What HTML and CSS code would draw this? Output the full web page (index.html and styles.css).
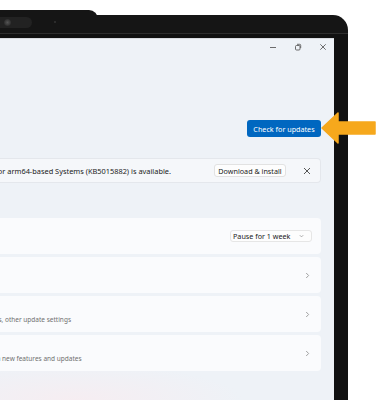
FILE: index.html
```html
<!DOCTYPE html>
<html lang="en">
<head>
    <meta charset="UTF-8">
    <meta name="viewport" content="width=device-width, initial-scale=1.0">
    <link rel="stylesheet" href="styles.css">
    <title>Windows Update</title>
</head>
<body>

    <div class="device">
        <div class="camera-bump"></div>
        <div class="camera"><span class="lens"></span></div>
        <span class="sensor"></span>

        <div class="screen">
            <div class="titlebar">
                <span class="ctl">
                    <svg width="8" height="8" viewBox="0 0 8 8"><path d="M1 4.5h6" stroke="#5c5c5c" stroke-width="0.9"/></svg>
                </span>
                <span class="ctl">
                    <svg width="8" height="8" viewBox="0 0 8 8" fill="none" stroke="#5c5c5c" stroke-width="0.9"><rect x="1.5" y="2.5" width="4.5" height="4.5" rx="1"/><path d="M3 1.3h2.7a1 1 0 0 1 1 1v2.7"/></svg>
                </span>
                <span class="ctl">
                    <svg width="8" height="8" viewBox="0 0 8 8"><path d="M1.3 1.3l5.4 5.4M6.7 1.3l-5.4 5.4" stroke="#5c5c5c" stroke-width="0.9"/></svg>
                </span>
            </div>

            <div class="actions">
                <button class="primary-btn">Check for updates</button>
            </div>

            <div class="notice">
                <div class="notice-text">
                    <span>2022-07 Cumulative Update for Windows 11 for arm64-based Systems (KB5015882) is available.</span>
                </div>
                <button class="ghost-btn">Download &amp; install</button>
                <span class="dismiss">
                    <svg width="8" height="8" viewBox="0 0 8 8"><path d="M1 1l6 6M7 1l-6 6" stroke="#444" stroke-width="0.9"/></svg>
                </span>
            </div>

            <div class="cards">
                <div class="card">
                    <div class="card-text">
                        <span class="card-title">Pause updates</span>
                    </div>
                    <div class="dropdown">
                        <span>Pause for 1 week</span>
                        <svg width="5" height="4" viewBox="0 0 5 4"><path d="M0.8 1.2l1.7 1.7 1.7-1.7" fill="none" stroke="#8a8a8a" stroke-width="0.7"/></svg>
                    </div>
                </div>
                <div class="card">
                    <div class="card-text">
                        <span class="card-title">Update history</span>
                    </div>
                    <span class="chevron"><svg width="5" height="7" viewBox="0 0 5 7"><path d="M1.2 1l2.4 2.5-2.4 2.5" fill="none" stroke="#8a8a8a" stroke-width="0.8"/></svg></span>
                </div>
                <div class="card">
                    <div class="card-text">
                        <span class="card-title">Advanced options</span>
                        <span class="card-sub">Delivery optimization, optional updates, active hours, other update settings</span>
                    </div>
                    <span class="chevron"><svg width="5" height="7" viewBox="0 0 5 7"><path d="M1.2 1l2.4 2.5-2.4 2.5" fill="none" stroke="#8a8a8a" stroke-width="0.8"/></svg></span>
                </div>
                <div class="card">
                    <div class="card-text">
                        <span class="card-title">Windows Insider Program</span>
                        <span class="card-sub">Get preview builds of Windows to share feedback on new features and updates</span>
                    </div>
                    <span class="chevron"><svg width="5" height="7" viewBox="0 0 5 7"><path d="M1.2 1l2.4 2.5-2.4 2.5" fill="none" stroke="#8a8a8a" stroke-width="0.8"/></svg></span>
                </div>
            </div>
        </div>
    </div>

    <!-- callout arrow pointing at the button -->
    <svg class="pointer" width="62" height="36" viewBox="0 0 62 36">
        <path d="M4 18 L20 3 L20 12 L57 12 L57 24 L20 24 L20 33 Z" fill="#f6a81c" stroke="#f6a81c" stroke-width="1.5" stroke-linejoin="round"/>
    </svg>

</body>
</html>
```

FILE: styles.css
```css
* {
    margin: 0;
    padding: 0;
    box-sizing: border-box;
}

body {
    font-family: 'Noto Sans', 'Liberation Sans', sans-serif;
    background-color: #fff;
    width: 380px;
    height: 400px;
    overflow: hidden;
    position: relative;
    color: #1b1b1b;
}

/* Tablet frame */
.device {
    position: relative;
    margin-top: 15px;
    width: 348px;
    height: 385px;
    background: linear-gradient(to bottom, #151515 0, #151515 18px, #2e2e2e 18px, #2e2e2e 19px, #111 19px);
    border-radius: 0 15px 0 0;
    padding: 23px 14px 0 0;
}

.camera-bump {
    position: absolute;
    top: -5px;
    left: 0;
    width: 98px;
    height: 10px;
    background-color: #151515;
    border-radius: 0 9px 0 0;
}

.camera {
    position: absolute;
    top: 2px;
    left: 0;
    width: 32px;
    height: 11px;
    border-radius: 0 6px 6px 0;
    background-color: #222;
}

.lens {
    position: absolute;
    top: 2px;
    left: 4px;
    width: 7px;
    height: 7px;
    border-radius: 50%;
    background: radial-gradient(circle, #555 0, #333 60%, #1c1c1c 100%);
}

.sensor {
    position: absolute;
    top: 6px;
    left: 54px;
    width: 2px;
    height: 2px;
    border-radius: 50%;
    background-color: #333;
}

.screen {
    height: 362px;
    background:
        radial-gradient(ellipse 170px 36px at 22% 100%, rgba(248, 236, 240, 0.8), rgba(248, 236, 240, 0)),
        #eef2f7;
    overflow: hidden;
    padding-right: 13px;
    display: flex;
    flex-direction: column;
    border-top: 1px solid #d8dbe0;
}

/* Window controls */
.titlebar {
    height: 15px;
    display: flex;
    justify-content: flex-end;
    align-items: center;
    gap: 5px;
    margin-right: -12px;
}

.ctl {
    width: 20px;
    height: 15px;
    display: flex;
    align-items: center;
    justify-content: center;
}

.actions {
    display: flex;
    justify-content: flex-end;
    margin-top: 66px;
}

.primary-btn {
    width: 74px;
    height: 17px;
    background-color: #0067c0;
    color: #fff;
    border: none;
    border-radius: 3px;
    font-family: inherit;
    font-size: 7.2px;
}

/* Update available banner */
.notice {
    margin-top: 21px;
    height: 25px;
    display: flex;
    align-items: center;
    background-color: #f5f7fa;
    border: 1px solid #e4e7ec;
    border-left: none;
    border-radius: 0 4px 4px 0;
}

.notice-text {
    width: 171px;
    display: flex;
    justify-content: flex-end;
    overflow: hidden;
    white-space: nowrap;
    font-size: 7.4px;
}

.ghost-btn {
    margin-left: auto;
    width: 72px;
    height: 13px;
    background-color: #fdfdfd;
    border: 1px solid #e2e2e2;
    border-radius: 3px;
    font-family: inherit;
    font-size: 7.2px;
    color: #1b1b1b;
}

.dismiss {
    width: 14px;
    margin: 0 6px 0 14px;
    display: flex;
    justify-content: center;
}

/* Settings rows */
.cards {
    margin-top: 35px;
    display: flex;
    flex-direction: column;
    gap: 3px;
}

.card {
    height: 36px;
    background-color: #fafbfd;
    border-radius: 0 4px 4px 0;
    display: flex;
    align-items: center;
    padding-right: 11px;
    white-space: nowrap;
}

.card-text {
    margin-left: -159px;
    display: flex;
    flex-direction: column;
    gap: 2px;
}

.card-title {
    font-size: 7.5px;
    line-height: 9px;
}

.card-sub {
    font-size: 6.5px;
    line-height: 8px;
    color: #707070;
}

.dropdown {
    margin-left: auto;
    margin-right: -2px;
    width: 82px;
    height: 12px;
    display: flex;
    align-items: center;
    justify-content: space-between;
    padding: 0 7px 0 2px;
    background-color: #fdfdfd;
    border: 1px solid #e6e6e6;
    border-radius: 3px;
    font-size: 7.2px;
}

.chevron {
    margin-left: auto;
    display: flex;
}

.pointer {
    position: absolute;
    left: 318px;
    top: 110px;
}
```
